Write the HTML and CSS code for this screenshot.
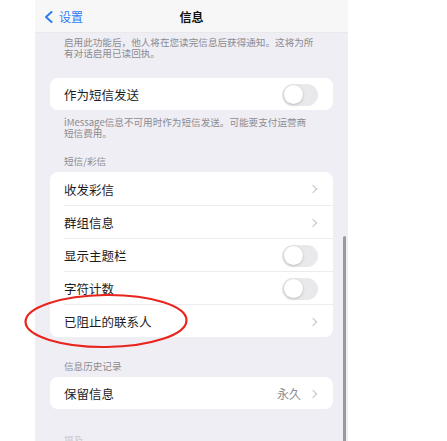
FILE: index.html
```html
<!DOCTYPE html>
<html lang="zh-CN">
<head>
<meta charset="utf-8">
<title>信息</title>
<link rel="stylesheet" href="styles.css">
</head>
<body>
<div class="stage">
  <div class="panel">
    <header class="navbar">
      <div class="nav-back">
        <svg class="back-icon" width="9" height="12" viewBox="0 0 9 12"><path d="M7.5 1 L2 6 L7.5 11" fill="none" stroke="#2f7cf6" stroke-width="2" stroke-linecap="round" stroke-linejoin="round"/></svg>
        <span>设置</span>
      </div>
      <div class="nav-title">信息</div>
    </header>

    <p class="note note-top">启用此功能后，他人将在您读完信息后获得通知。这将为所<br>有对话启用已读回执。</p>

    <section class="card card-first">
      <div class="row"><div class="row-inner"><span class="label">作为短信发送</span><span class="switch"><span class="knob"></span></span></div></div>
    </section>
    <p class="note">iMessage信息不可用时作为短信发送。可能要支付运营商<br>短信费用。</p>

    <h3 class="section-title">短信/彩信</h3>
    <section class="card">
      <div class="row"><div class="row-inner"><span class="label">收发彩信</span><span class="chev"></span></div></div>
      <div class="row"><div class="row-inner"><span class="label">群组信息</span><span class="chev"></span></div></div>
      <div class="row"><div class="row-inner"><span class="label">显示主题栏</span><span class="switch"><span class="knob"></span></span></div></div>
      <div class="row"><div class="row-inner"><span class="label">字符计数</span><span class="switch"><span class="knob"></span></span></div></div>
      <div class="row"><div class="row-inner"><span class="label">已阻止的联系人</span><span class="chev"></span></div></div>
    </section>

    <h3 class="section-title section-gap">信息历史记录</h3>
    <section class="card">
      <div class="row"><div class="row-inner"><span class="label">保留信息</span><span class="value">永久</span><span class="chev"></span></div></div>
    </section>

    <h3 class="section-title section-gap faint">提及</h3>

    <div class="scrollbar"></div>
  </div>
</div>

<svg class="circle-mark" width="170" height="60" viewBox="0 0 170 60">
  <ellipse cx="84" cy="29" rx="80.5" ry="26" fill="none" stroke="#e8241c" stroke-width="2.2" transform="rotate(-0.6 84 29)"/>
</svg>
</body>
</html>
```

FILE: styles.css
```css
html, body {
  margin: 0;
  padding: 0;
  background: #ffffff;
}

body {
  font-family: "Noto Sans CJK SC", "Noto Sans", sans-serif;
  color: #1d1d1f;
  width: 447px;
  height: 441px;
  overflow: hidden;
  position: relative;
}

.stage {
  display: flex;
  padding-left: 35px;
  height: 441px;
}

.panel {
  position: relative;
  width: 313px;
  height: 441px;
  background: #efeef4;
  overflow: hidden;
  display: flex;
  flex-direction: column;
}

/* the list scrolls past the bottom edge, so nothing may shrink */
.panel > * {
  flex-shrink: 0;
}

/* top navigation bar */
.navbar {
  height: 33px;
  background: #f7f7f8;
  border-bottom: 1px solid #e9e9ec;
  box-sizing: border-box;
  display: flex;
  align-items: center;
  justify-content: center;
  position: relative;
}

.nav-back {
  position: absolute;
  left: 9px;
  top: 0;
  height: 33px;
  display: flex;
  align-items: center;
  gap: 6px;
  color: #2f7cf6;
  font-size: 12px;
}

.back-icon {
  display: block;
}

.nav-title {
  font-size: 12px;
  font-weight: 700;
  color: #111;
}

/* footnotes under groups */
.note {
  margin: 7px 15px 0 29px;
  font-size: 9.6px;
  line-height: 11px;
  color: #8b8b90;
  white-space: nowrap;
}

.note-top {
  margin-top: 4px;
}

.section-title {
  margin: 17px 0 0 29px;
  font-size: 9.6px;
  line-height: 11px;
  font-weight: 400;
  color: #8b8b90;
}

.section-gap {
  margin-top: 24px;
}

.section-gap.faint {
  margin-top: 26px;
  color: #c8c8cc;
}

/* grouped cards */
.card {
  margin: 5px 15px 0;
  background: #ffffff;
  border-radius: 8px;
  overflow: hidden;
}

.card-first {
  margin-top: 19px;
}

.row {
  padding-left: 14px;
}

.row-inner {
  height: 33px;
  box-sizing: border-box;
  display: flex;
  align-items: center;
  padding: 1px 15px 0 0;
}

.row + .row .row-inner {
  border-top: 1px solid #ececee;
}

.card-first .row-inner,
.card:last-of-type .row-inner {
  height: 32px;
}

.label {
  flex: 1;
  font-size: 12.5px;
  color: #1d1d1f;
}

.value {
  font-size: 12px;
  color: #8e8e93;
  margin-right: 9px;
}

.chev {
  width: 5px;
  height: 5px;
  border-top: 1.4px solid #c4c4c8;
  border-right: 1.4px solid #c4c4c8;
  transform: rotate(45deg);
  margin-right: 2px;
}

/* off-state toggle */
.switch {
  width: 36px;
  height: 22px;
  border-radius: 11px;
  background: #e9e9eb;
  position: relative;
  flex: none;
}

.knob {
  position: absolute;
  left: 1.5px;
  top: 1.5px;
  width: 19px;
  height: 19px;
  border-radius: 50%;
  background: #ffffff;
  box-shadow: 0 1px 3px rgba(0, 0, 0, 0.18), 0 0 0 0.5px rgba(0, 0, 0, 0.04);
}

.scrollbar {
  position: absolute;
  left: 308px;
  top: 236px;
  width: 2.5px;
  bottom: 0;
  border-radius: 2px 2px 0 0;
  background: #9a9a9e;
}

/* hand-drawn highlight */
.circle-mark {
  position: absolute;
  left: 22px;
  top: 292px;
}
```
